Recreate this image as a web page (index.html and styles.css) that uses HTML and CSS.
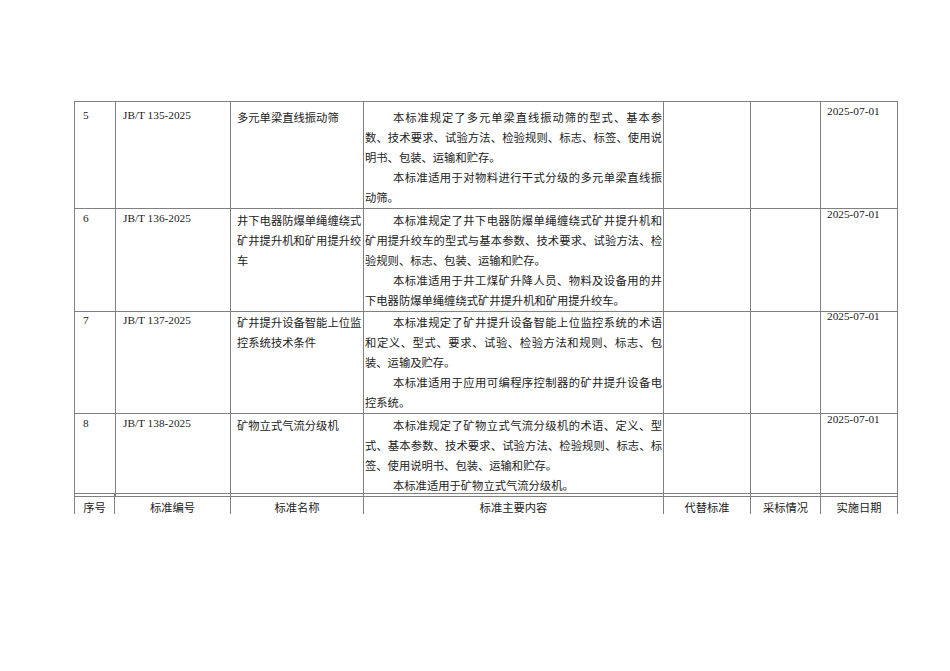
FILE: index.html
```html
<!DOCTYPE html>
<html lang="zh-CN">
<head>
<meta charset="utf-8">
<title>标准目录</title>
<link rel="stylesheet" href="styles.css">
</head>
<body>
<div class="page">
  <div class="tbl">
    <div class="row r1">
      <div class="c no">5</div>
      <div class="c code">JB/T 135-2025</div>
      <div class="c name">多元单梁直线振动筛</div>
      <div class="c desc">
        <div class="ln ind">本标准规定了多元单梁直线振动筛的型式、基本参</div>
        <div class="ln">数、技术要求、试验方法、检验规则、标志、标签、使用说</div>
        <div class="end">明书、包装、运输和贮存。</div>
        <div class="ln ind">本标准适用于对物料进行干式分级的多元单梁直线振</div>
        <div class="end">动筛。</div>
      </div>
      <div class="c"></div>
      <div class="c"></div>
      <div class="c date">2025-07-01</div>
    </div>
    <div class="row r2">
      <div class="c no">6</div>
      <div class="c code">JB/T 136-2025</div>
      <div class="c name">井下电器防爆单绳缠绕式<br>矿井提升机和矿用提升绞<br>车</div>
      <div class="c desc">
        <div class="ln ind">本标准规定了井下电器防爆单绳缠绕式矿井提升机和</div>
        <div class="ln">矿用提升绞车的型式与基本参数、技术要求、试验方法、检</div>
        <div class="end">验规则、标志、包装、运输和贮存。</div>
        <div class="ln ind">本标准适用于井工煤矿升降人员、物料及设备用的井</div>
        <div class="end">下电器防爆单绳缠绕式矿井提升机和矿用提升绞车。</div>
      </div>
      <div class="c"></div>
      <div class="c"></div>
      <div class="c date">2025-07-01</div>
    </div>
    <div class="row r3">
      <div class="c no">7</div>
      <div class="c code">JB/T 137-2025</div>
      <div class="c name">矿井提升设备智能上位监<br>控系统技术条件</div>
      <div class="c desc">
        <div class="ln ind">本标准规定了矿井提升设备智能上位监控系统的术语</div>
        <div class="ln">和定义、型式、要求、试验、检验方法和规则、标志、包</div>
        <div class="end">装、运输及贮存。</div>
        <div class="ln ind">本标准适用于应用可编程序控制器的矿井提升设备电</div>
        <div class="end">控系统。</div>
      </div>
      <div class="c"></div>
      <div class="c"></div>
      <div class="c date">2025-07-01</div>
    </div>
    <div class="row r4">
      <div class="c no">8</div>
      <div class="c code">JB/T 138-2025</div>
      <div class="c name">矿物立式气流分级机</div>
      <div class="c desc">
        <div class="ln ind">本标准规定了矿物立式气流分级机的术语、定义、型</div>
        <div class="ln">式、基本参数、技术要求、试验方法、检验规则、标志、标</div>
        <div class="end">签、使用说明书、包装、运输和贮存。</div>
        <div class="end ind">本标准适用于矿物立式气流分级机。</div>
      </div>
      <div class="c"></div>
      <div class="c"></div>
      <div class="c date">2025-07-01</div>
    </div>
    <div class="hdr">
      <div class="h">序号</div>
      <div class="h">标准编号</div>
      <div class="h">标准名称</div>
      <div class="h">标准主要内容</div>
      <div class="h">代替标准</div>
      <div class="h">采标情况</div>
      <div class="h">实施日期</div>
    </div>
  </div>
</div>
</body>
</html>
```

FILE: styles.css
```css
* {
  box-sizing: border-box;
}

body {
  margin: 0;
  background: #ffffff;
  color: #222222;
  font-family: "Liberation Serif", "Noto Sans CJK SC", serif;
  font-size: 11.3px;
}

.page {
  padding: 101px 0 0 74px;
}

.tbl {
  width: 824px;
  border-left: 1px solid #808080;
  border-top: 1px solid #808080;
}

.row {
  display: grid;
  grid-template-columns: 41px 115px 133px 300px 87px 70px 77px;
}

.r1 { height: 103px; }
.r2 { height: 102px; }
.r3 { height: 103px; }
.r4 { height: 83px; }

.c {
  border-right: 1px solid #808080;
  border-bottom: 1px solid #808080;
  line-height: 20px;
  overflow: visible;
  min-width: 0;
}

.no {
  padding: 3px 0 0 8px;
}

.code {
  padding: 3px 0 0 7px;
}

.name {
  padding: 6px 0 0 6px;
}

.desc {
  padding: 6px 1px 0 1px;
}

.date {
  padding: 0 0 0 6px;
  line-height: 18px;
}

.ln {
  text-align: justify;
  text-align-last: justify;
}

.end {
  text-align: left;
}

.ind {
  text-indent: 28px;
}

.hdr {
  display: grid;
  grid-template-columns: 40px 116px 133px 300px 87px 70px 77px;
  height: 21px;
  border-top: 1px solid #808080;
  overflow: hidden;
}

.h {
  border-right: 1px solid #808080;
  text-align: center;
  line-height: 20px;
  padding-top: 4px;
  white-space: nowrap;
}
```
